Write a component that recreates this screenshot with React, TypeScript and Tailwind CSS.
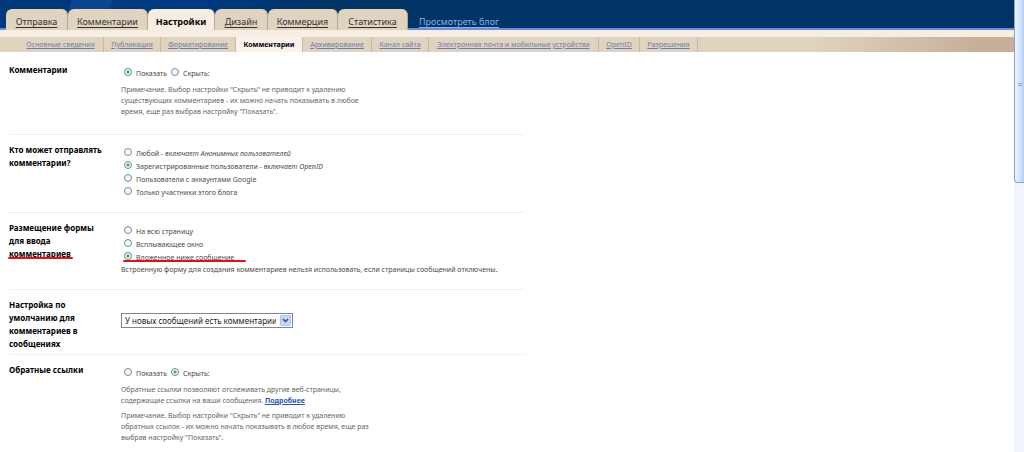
import React from 'react';
import clsx from 'clsx';

const tabs = [
  { title: 'Отправка', width: 'w-[62px]' },
  { title: 'Комментарии', width: 'w-[80px]' },
  { title: 'Настройки', width: 'w-[67px]', active: true },
  { title: 'Дизайн', width: 'w-[53px]' },
  { title: 'Коммерция', width: 'w-[70px]' },
  { title: 'Статистика', width: 'w-[70px]' },
];

const subTabs = [
  { title: 'Основные сведения', width: 'w-[86px]' },
  { title: 'Публикация', width: 'w-[57px]' },
  { title: 'Форматирование', width: 'w-[75px]' },
  { title: 'Комментарии', width: 'w-[67px]', active: true },
  { title: 'Архивирование', width: 'w-[69px]' },
  { title: 'Канал сайта', width: 'w-[57px]' },
  { title: 'Электронная почта и мобильные устройства', width: 'w-[170px]' },
  { title: 'OpenID', width: 'w-[41px]' },
  { title: 'Разрешения', width: 'w-[58px]' },
];

const Radio: React.FC<{
  name: string;
  checked?: boolean;
  children: React.ReactNode;
}> = ({ name, checked, children }) => {
  return (
    <label className="flex h-[13px] items-start gap-1 leading-[13px]">
      <input
        type="radio"
        name={name}
        defaultChecked={checked}
        className="mt-px size-2 shrink-0 appearance-none rounded-full border border-[#6f8fa8] bg-[#f6f8f8] checked:border-[#5f9283] checked:bg-[radial-gradient(circle,#4fa565_0_1px,#f2f8f3_2px)]"
      />
      <span className="whitespace-nowrap">{children}</span>
    </label>
  );
};

const Note: React.FC<{ children: React.ReactNode }> = ({ children }) => {
  return <p className="mt-1 whitespace-nowrap leading-[11px] text-[#666]">{children}</p>;
};

const Row: React.FC<{
  title: React.ReactNode;
  last?: boolean;
  children: React.ReactNode;
}> = ({ title, last, children }) => {
  return (
    <section
      className={clsx('flex max-w-[516px]', !last && 'border-b border-[#f1f1f1]')}
    >
      <h2 className="w-28 shrink-0 whitespace-nowrap pt-2 pb-1 text-[8px] leading-[13px] font-bold text-black">
        {title}
      </h2>
      <div className="min-w-0 flex-1 pt-3 pb-[13px]">{children}</div>
    </section>
  );
};

const Header: React.FC = () => {
  return (
    <header>
      <nav className="flex h-[30px] items-end border-b-2 border-[#6690dd] bg-[#003366] bg-[linear-gradient(105deg,#003a7d_0_7%,#0a4590_7%_11%,#003a80_11%_20%,#003366_32%)] pl-1.5 text-[9px]">
        {tabs.map((tab) => (
          <a
            key={tab.title}
            href="#"
            className={clsx(
              '-mb-0.5 flex h-[21px] shrink-0 items-center justify-center rounded-t-md border-r border-[#b5a68f] pt-1 whitespace-nowrap',
              tab.width,
              tab.active
                ? 'bg-[#f6ede3] font-bold text-black'
                : 'bg-[#e0d3c0] text-[#333] underline underline-offset-2',
            )}
          >
            {tab.title}
          </a>
        ))}
        <a
          href="#"
          className="-mb-0.5 flex h-[21px] items-center pt-1 pl-[11px] whitespace-nowrap text-[#83b5e8] underline underline-offset-2"
        >
          Просмотреть блог
        </a>
      </nav>
      <nav className="bg-[#f6ede3] pt-[7px]">
        <div className="flex h-[15px] bg-[linear-gradient(90deg,#e0d3c0_80%,#c6ae98_97%)] pl-[18px] text-[7px]">
          {subTabs.map((tab) => (
            <a
              key={tab.title}
              href="#"
              className={clsx(
                'flex shrink-0 items-center justify-center border-r border-[#c9b9a3] pt-px whitespace-nowrap',
                tab.width,
                tab.active
                  ? 'bg-[#f9f3eb] font-bold text-black'
                  : 'text-[#6d7db0] underline underline-offset-1',
              )}
            >
              {tab.title}
            </a>
          ))}
        </div>
      </nav>
    </header>
  );
};

const App: React.FC = () => {
  return (
    <div className="flex min-h-screen bg-white font-['Noto_Sans','Open_Sans',sans-serif]">
      <div className="min-w-0 flex-1">
        <Header />
        <main className="pt-[3px] pl-[9px] text-[7px] text-[#4a4a4a]">
          <Row title="Комментарии">
            <div className="flex gap-1 pl-[3px]">
              <Radio name="comments" checked>
                Показать
              </Radio>
              <Radio name="comments">Скрыть:</Radio>
            </div>
            <Note>
              Примечание. Выбор настройки "Скрыть" не приводит к удалению
              <br />
              существующих комментариев - их можно начать показывать в любое
              <br />
              время, еще раз выбрав настройку "Показать".
            </Note>
            <div className="h-1" />
          </Row>

          <Row
            title={
              <>
                Кто может отправлять
                <br />
                комментарии?
              </>
            }
          >
            <div className="pl-[3px]">
              <Radio name="who">
                Любой - <em>включает Анонимных пользователей</em>
              </Radio>
              <Radio name="who" checked>
                Зарегистрированные пользователи - <em>включает OpenID</em>
              </Radio>
              <Radio name="who">Пользователи с аккаунтами Google</Radio>
              <Radio name="who">Только участники этого блога</Radio>
            </div>
          </Row>

          <Row
            title={
              <>
                Размещение формы
                <br />
                для ввода
                <br />
                <span className="relative">
                  комментариев
                  <span className="absolute -left-px bottom-0 h-0.5 w-[65px] rounded-full bg-[#e0101c]" />
                </span>
              </>
            }
          >
            <div className="pl-[3px]">
              <Radio name="placement">На всю страницу</Radio>
              <Radio name="placement">Всплывающее окно</Radio>
              <div className="relative">
                <Radio name="placement" checked>
                  Вложенное ниже сообщение
                </Radio>
                <span className="absolute bottom-0.5 -left-px h-0.5 w-[123px] rounded-full bg-[#e0101c]" />
              </div>
            </div>
            <p className="leading-3 whitespace-nowrap">
              Встроенную форму для создания комментариев нельзя использовать, если страницы
              сообщений отключены.
            </p>
          </Row>

          <Row
            title={
              <label htmlFor="defaults">
                Настройка по
                <br />
                умолчанию для
                <br />
                комментариев в
                <br />
                сообщениях
              </label>
            }
          >
            <div className="relative mt-[11px] w-[172px]">
              <select
                id="defaults"
                className="block h-[15px] w-full appearance-none border border-[#7f8790] bg-white pr-4 pl-[3px] text-[8px] leading-[13px] text-[#222]"
              >
                <option>У новых сообщений есть комментарии</option>
                <option>У новых сообщений нет комментариев</option>
              </select>
              <svg
                viewBox="0 0 11 11"
                className="pointer-events-none absolute top-0.5 right-0.5 size-[11px]"
              >
                <rect x="0.5" y="0.5" width="10" height="10" rx="1" fill="#c6d8fa" stroke="#a9c0ee" />
                <path d="M3 4l2.5 2.5L8 4" fill="none" stroke="#3f5685" strokeWidth="1.6" />
              </svg>
            </div>
          </Row>

          <Row title="Обратные ссылки" last>
            <div className="flex gap-1 pl-[3px]">
              <Radio name="backlinks">Показать</Radio>
              <Radio name="backlinks" checked>
                Скрыть:
              </Radio>
            </div>
            <Note>
              Обратные ссылки позволяют отслеживать другие веб-страницы,
              <br />
              содержащие ссылки на ваши сообщения.{' '}
              <a href="#" className="font-bold text-[#2a56b0] underline">
                Подробнее
              </a>
            </Note>
            <Note>
              Примечание. Выбор настройки "Скрыть" не приводит к удалению
              <br />
              обратных ссылок - их можно начать показывать в любое время, еще раз
              <br />
              выбрав настройку "Показать".
            </Note>
          </Row>
        </main>
      </div>

      <div className="w-2.5 shrink-0 bg-[#f1f4fe]">
        <div className="flex h-[183px] items-center justify-center rounded-bl-sm border-b border-l border-[#8fa3c4] bg-[linear-gradient(90deg,#eaf4ff,#cfe3fd_60%,#b4cdf3)]">
          <svg viewBox="0 0 4 4" className="mb-3 size-1">
            <path d="M0 .5h4M0 2.5h4" stroke="#8fa6c8" />
          </svg>
        </div>
      </div>
    </div>
  );
};

export default App;
